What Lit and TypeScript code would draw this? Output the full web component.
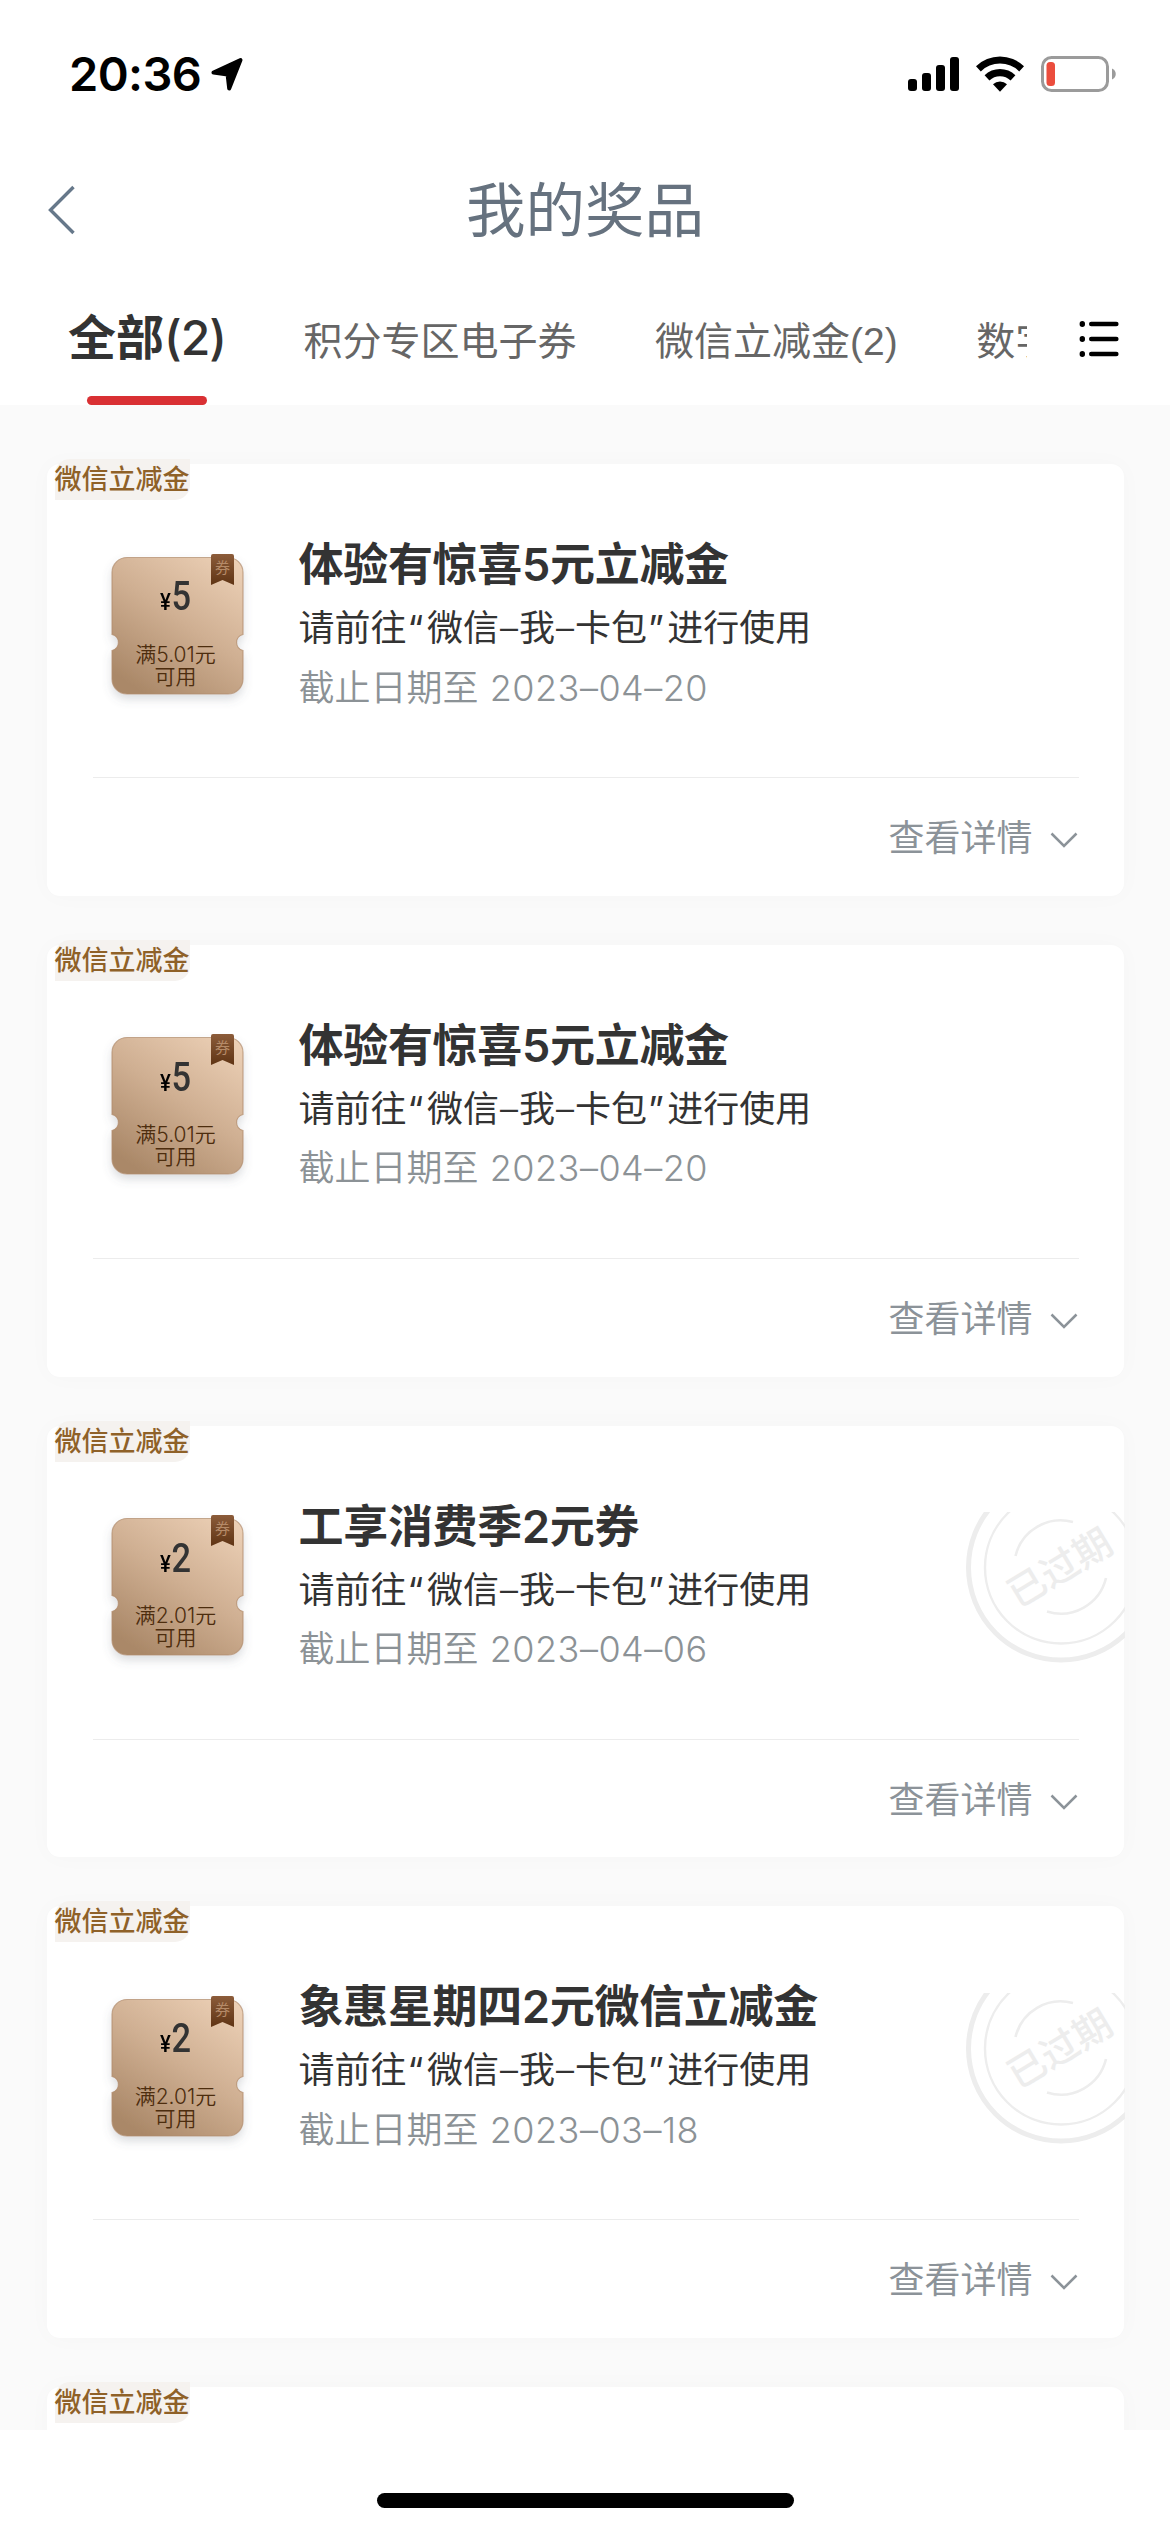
import { LitElement, html, css, svg, nothing } from "lit";
import { customElement, property } from "lit/decorators.js";

interface Prize {
  title: string;
  amount: string;
  threshold: string;
  deadline: string;
  expired?: boolean;
}

const PRIZES: Prize[] = [
  { title: "体验有惊喜5元立减金", amount: "5", threshold: "满5.01元", deadline: "2023–04–20" },
  { title: "体验有惊喜5元立减金", amount: "5", threshold: "满5.01元", deadline: "2023–04–20" },
  { title: "工享消费季2元券", amount: "2", threshold: "满2.01元", deadline: "2023–04–06", expired: true },
  { title: "象惠星期四2元微信立减金", amount: "2", threshold: "满2.01元", deadline: "2023–03–18", expired: true },
  { title: "", amount: "", threshold: "", deadline: "" },
];

@customElement("status-bar")
class StatusBar extends LitElement {
  static styles = css`
    :host {
      display: flex;
      justify-content: space-between;
      height: 141px;
      padding: 45px 54px 0 69px;
      box-sizing: border-box;
    }
    .left,
    .right {
      display: flex;
      align-items: center;
      height: 58px;
    }
    .time {
      font: 600 47px/58px Inter, sans-serif;
      letter-spacing: -0.6px;
      color: #000;
    }
    .arrow {
      margin-left: 10px;
    }
    .right {
      gap: 17px;
    }
    svg {
      display: block;
    }
  `;
  render() {
    return html`
      <div class="left">
        <span class="time">20:36</span>
        <svg class="arrow" width="32" height="34" viewBox="0 0 32 34">
          <path d="M2.5 15.5 29.5 3 18.2 31.5 16.6 17.4Z" stroke="#000" stroke-width="4" stroke-linejoin="round" />
        </svg>
      </div>
      <div class="right">
        <svg width="51" height="34" viewBox="0 0 51 34">
          <rect x="0" y="22" width="9" height="12" rx="3" />
          <rect x="14" y="16" width="9" height="18" rx="3" />
          <rect x="28" y="8" width="9" height="26" rx="3" />
          <rect x="42" y="0" width="9" height="34" rx="3" />
        </svg>
        <svg width="48" height="36" viewBox="0 0 48 36">
          <path d="M0 10.2A34.5 34.5 0 0 1 48 10.2L43.2 15.4A27.5 27.5 0 0 0 4.8 15.4Z" />
          <path d="M8.6 19.2A22 22 0 0 1 39.4 19.2L34.6 24.4A15.3 15.3 0 0 0 13.4 24.4Z" />
          <path d="M17 28.3A10.4 10.4 0 0 1 31 28.3L24 35.8Z" />
        </svg>
        <svg width="75" height="36" viewBox="0 0 75 36">
          <rect x="1.5" y="1.5" width="65" height="33" rx="9" fill="none" stroke="#9b9b9b" stroke-width="3" />
          <rect x="5.5" y="6" width="8.5" height="24" rx="3.5" fill="#eb4d3d" />
          <path d="M71 12.5C76 14.500 76 21.500 71 23.500Z" fill="#9b9b9b" />
        </svg>
      </div>
    `;
  }
}

@customElement("prize-ticket")
class PrizeTicket extends LitElement {
  @property() amount = "";
  @property() threshold = "";

  static styles = css`
    :host {
      display: grid;
      width: 133px;
      height: 142px;
    }
    .shape,
    .label {
      grid-area: 1 / 1;
    }
    .shape {
      display: block;
      overflow: visible;
    }
    .label {
      position: relative;
      display: flex;
      flex-direction: column;
      align-items: center;
      padding-right: 3px;
      padding-top: 21.500px;
    }
    .price {
      display: flex;
      align-items: baseline;
      height: 46px;
      line-height: 46px;
      font-family: Roboto, sans-serif;
      color: #333;
    }
    .yen {
      font-size: 24px;
      font-weight: 500;
      color: #000;
      transform: scaleX(0.85);
    }
    .num {
      font-size: 40px;
      font-weight: 500;
      transform: scaleX(0.86);
      margin-left: -2px;
    }
    .rule {
      margin-top: 23.500px;
      font: 400 21px/22px Inter, "Noto Sans CJK SC", sans-serif;
      font-weight: 350;
      color: #4d2d0e;
      text-align: center;
    }
  `;
  render() {
    return html`
      <svg class="shape" width="133" height="142" viewBox="0 0 133 142">
        <defs>
          <linearGradient id="body" x1="0.9" y1="0" x2="0.25" y2="1">
            <stop offset="0" stop-color="#ecd0b6" />
            <stop offset="0.5" stop-color="#cfaf92" />
            <stop offset="1" stop-color="#aa8868" />
          </linearGradient>
          <linearGradient id="ribbon" x1="0" y1="0" x2="0" y2="1">
            <stop offset="0" stop-color="#8c5c3a" />
            <stop offset="1" stop-color="#5f3414" />
          </linearGradient>
          <filter id="soft" x="-20%" y="-20%" width="140%" height="150%">
            <feDropShadow dx="0" dy="5" stdDeviation="5" flood-color="#5b6470" flood-opacity="0.22" />
          </filter>
        </defs>
        <path
          filter="url(#soft)"
          fill="url(#body)"
          stroke="#b08c6c"
          stroke-opacity="0.7"
          stroke-width="1.2"
          d="M16 4.500H117A15 15 0 0 1 132 19.500V81.500A8.200 8.200 0 0 0 132 97.500V126A15 15 0 0 1 117 141H16A15 15 0 0 1 1 126V97.500A8.200 8.200 0 0 0 1 81.500V19.500A15 15 0 0 1 16 4.500Z"
        />
        <path d="M100 3A2 2 0 0 1 102 1H121A2 2 0 0 1 123 3V32L111.500 27 100 32Z" fill="url(#ribbon)" />
        <text x="111.500" y="20" text-anchor="middle" font-size="15" fill="#b58a68" font-family="Noto Sans CJK SC, sans-serif">券</text>
      </svg>
      <div class="label">
        <div class="price"><span class="yen">¥</span><span class="num">${this.amount}</span></div>
        <div class="rule">${this.threshold}<br />可用</div>
      </div>
    `;
  }
}

const stamp = svg`
  <circle cx="96" cy="55.500" r="92.500" stroke-width="5" />
  <circle cx="96" cy="55.500" r="76" stroke-width="2.400" />
  <path d="M50.500 44A46.500 46.500 0 0 1 108 10.100M141 66A46.500 46.500 0 0 1 82 99.500" stroke-width="2.600" />
  <text x="94.500" y="69.500" text-anchor="middle" transform="rotate(-31 94.500 55.500)" font-size="38" font-weight="500" fill="#ededed"
    stroke="none" font-family="Noto Sans CJK SC, sans-serif">已过期</text>`;

@customElement("prize-card")
class PrizeCard extends LitElement {
  @property({ attribute: false }) prize!: Prize;

  static styles = css`
    :host {
      display: block;
      position: relative;
      flex: none;
      height: 431.75px;
      background: #fff;
      border-radius: 13px;
      box-shadow: 0 0 24px rgba(0, 0, 0, 0.024);
      font-family: Inter, "Noto Sans CJK SC", sans-serif;
    }
    .badge {
      position: absolute;
      left: 8px;
      top: -5px;
      height: 41px;
      width: 135px;
      box-sizing: border-box;
      font-size: 27px;
      line-height: 42px;
      font-weight: 450;
      color: #8f6128;
      background: #f5f2ef;
      border-radius: 15px 0 15px 0;
      white-space: nowrap;
    }
    .stamp {
      position: absolute;
      right: -1.5px;
      top: 86.500px;
      display: block;
      fill: none;
      stroke: #ededed;
    }
    .main {
      display: flex;
      align-items: flex-start;
      height: 313px;
      box-sizing: border-box;
      padding: 88.500px 46px 0 64px;
      margin: 0;
    }
    .info {
      margin: -15.500px 0 0 55px;
      white-space: nowrap;
    }
    .title {
      font-size: 45px;
      line-height: 56px;
      font-weight: 600;
      letter-spacing: -0.3px;
      color: #333;
    }
    .hint {
      margin-top: 8px;
      font-size: 36px;
      line-height: 54px;
      font-weight: 380;
      color: #333;
    }
    .open {
      margin-left: 1px;
      letter-spacing: 3.500px;
    }
    .close {
      margin-left: 1px;
      letter-spacing: 3.500px;
    }
    .dash {
      letter-spacing: 1px;
      margin-left: 1px;
      font-weight: 350;
    }
    .date {
      margin-top: 5.500px;
      font-size: 36px;
      line-height: 54px;
      color: #8c9296;
      font-weight: 350;
    }
    .num {
      letter-spacing: 0.5px;
      margin-left: 1px;
      font-weight: 300;
    }
    .more {
      margin: 0 45px 0 46px;
      border-top: 1.500px solid #ececec;
      height: 118px;
      padding-top: 3px;
      box-sizing: border-box;
      display: flex;
      align-items: center;
      justify-content: flex-end;
      font-size: 36px;
      font-weight: 380;
      color: #8c9399;
      gap: 17px;
      line-height: 50px;
    }
    .more svg {
      margin: 2px 1px 0 0;
    }
  `;
  render() {
    const p = this.prize;
    const dash = html`<span class="dash">–</span>`;
    return html`
      <div class="badge">微信立减金</div>
      ${p.expired ? html`<svg class="stamp" width="160" height="152" viewBox="0 0 160 152">${stamp}</svg>` : nothing}
      ${p.title
        ? html`
            <div class="main">
              <prize-ticket .amount=${p.amount} .threshold=${p.threshold}></prize-ticket>
              <div class="info">
                <div class="title">${p.title}</div>
                <div class="hint">请前往<span class="open">“</span>微信${dash}我${dash}卡包<span class="close">”</span>进行使用</div>
                <div class="date">截止日期至 <span class="num">${p.deadline}</span></div>
              </div>
            </div>
            <div class="more">
              <span>查看详情</span>
              <svg width="28" height="18" viewBox="0 0 28 18" fill="none" stroke="#8c9399" stroke-width="2.500">
                <path d="M1.500 3.500 14 16 26.500 3.500" />
              </svg>
            </div>
          `
        : nothing}
    `;
  }
}

@customElement("app-root")
class AppRoot extends LitElement {
  static styles = css`
    :host {
      display: flex;
      flex-direction: column;
      width: 1170px;
      height: 2532px;
      overflow: hidden;
      background: #fff;
      font-family: Inter, "Noto Sans CJK SC", sans-serif;
    }
    .nav {
      display: grid;
      grid-template-columns: 120px 1fr 120px;
      align-items: center;
      height: 138px;
    }
    .back {
      display: block;
      margin-left: 47px;
    }
    .heading {
      text-align: center;
      font-size: 59.500px;
      line-height: 80px;
      color: #66727f;
    }
    .tabs {
      display: flex;
      height: 126px;
    }
    .strip {
      display: flex;
      width: 1027px;
      padding-left: 69px;
      box-sizing: border-box;
      overflow: hidden;
      white-space: nowrap;
    }
    .tab {
      flex: none;
      margin-right: 78.500px;
      padding-top: 34.500px;
      font: 400 39px/56px "Liberation Sans", "Noto Sans CJK SC", sans-serif;
      font-weight: 370;
      color: #666;
    }
    .active {
      display: flex;
      flex-direction: column;
      align-items: center;
      justify-content: space-between;
      width: 156px;
      padding-top: 28.500px;
      font: 600 48px/60px Inter, "Noto Sans CJK SC", sans-serif;
      color: #333;
    }
    .count {
      font-weight: 500;
      letter-spacing: -1px;
    }
    .bar {
      width: 120px;
      height: 9px;
      border-radius: 5px;
      background: #d93033;
    }
    .menu {
      display: block;
      margin: 41px 0 0 51.500px;
    }
    .list {
      display: flex;
      flex-direction: column;
      gap: 49px;
      flex: 1;
      min-height: 0;
      overflow: hidden;
      padding: 59px 46.500px 0;
      background: #fafafa;
    }
    .foot {
      flex: none;
      height: 102px;
      display: flex;
      justify-content: center;
      align-items: flex-start;
      background: #fff;
    }
    .home {
      width: 417px;
      height: 15px;
      margin-top: 63px;
      border-radius: 8px;
      background: #000;
    }
  `;
  render() {
    return html`
      <status-bar></status-bar>
      <div class="nav">
        <svg class="back" width="30" height="50" viewBox="0 0 30 50" fill="none" stroke="#66788a" stroke-width="3.400">
          <path d="M26.500 2 3.500 25 26.500 48" />
        </svg>
        <div class="heading">我的奖品</div>
      </div>
      <div class="tabs">
        <div class="strip">
          <div class="tab active"><span>全部<span class="count">(2)</span></span><div class="bar"></div></div>
          <div class="tab">积分专区电子券</div>
          <div class="tab">微信立减金(2)</div>
          <div class="tab">数字人民币</div>
        </div>
        <svg class="menu" width="41" height="38" viewBox="0 0 41 38" stroke="#000" stroke-width="4.600" stroke-linecap="round">
          <path d="M12.300 4H37.300M12.300 19H37.300M12.300 34H37.300" />
          <path d="M3.300 3.700V4.300M3.300 18.700V19.300M3.300 33.700V34.300" stroke-width="5.400" />
        </svg>
      </div>
      <div class="list">${PRIZES.map((p) => html`<prize-card .prize=${p}></prize-card>`)}</div>
      <div class="foot"><div class="home"></div></div>
    `;
  }
}
